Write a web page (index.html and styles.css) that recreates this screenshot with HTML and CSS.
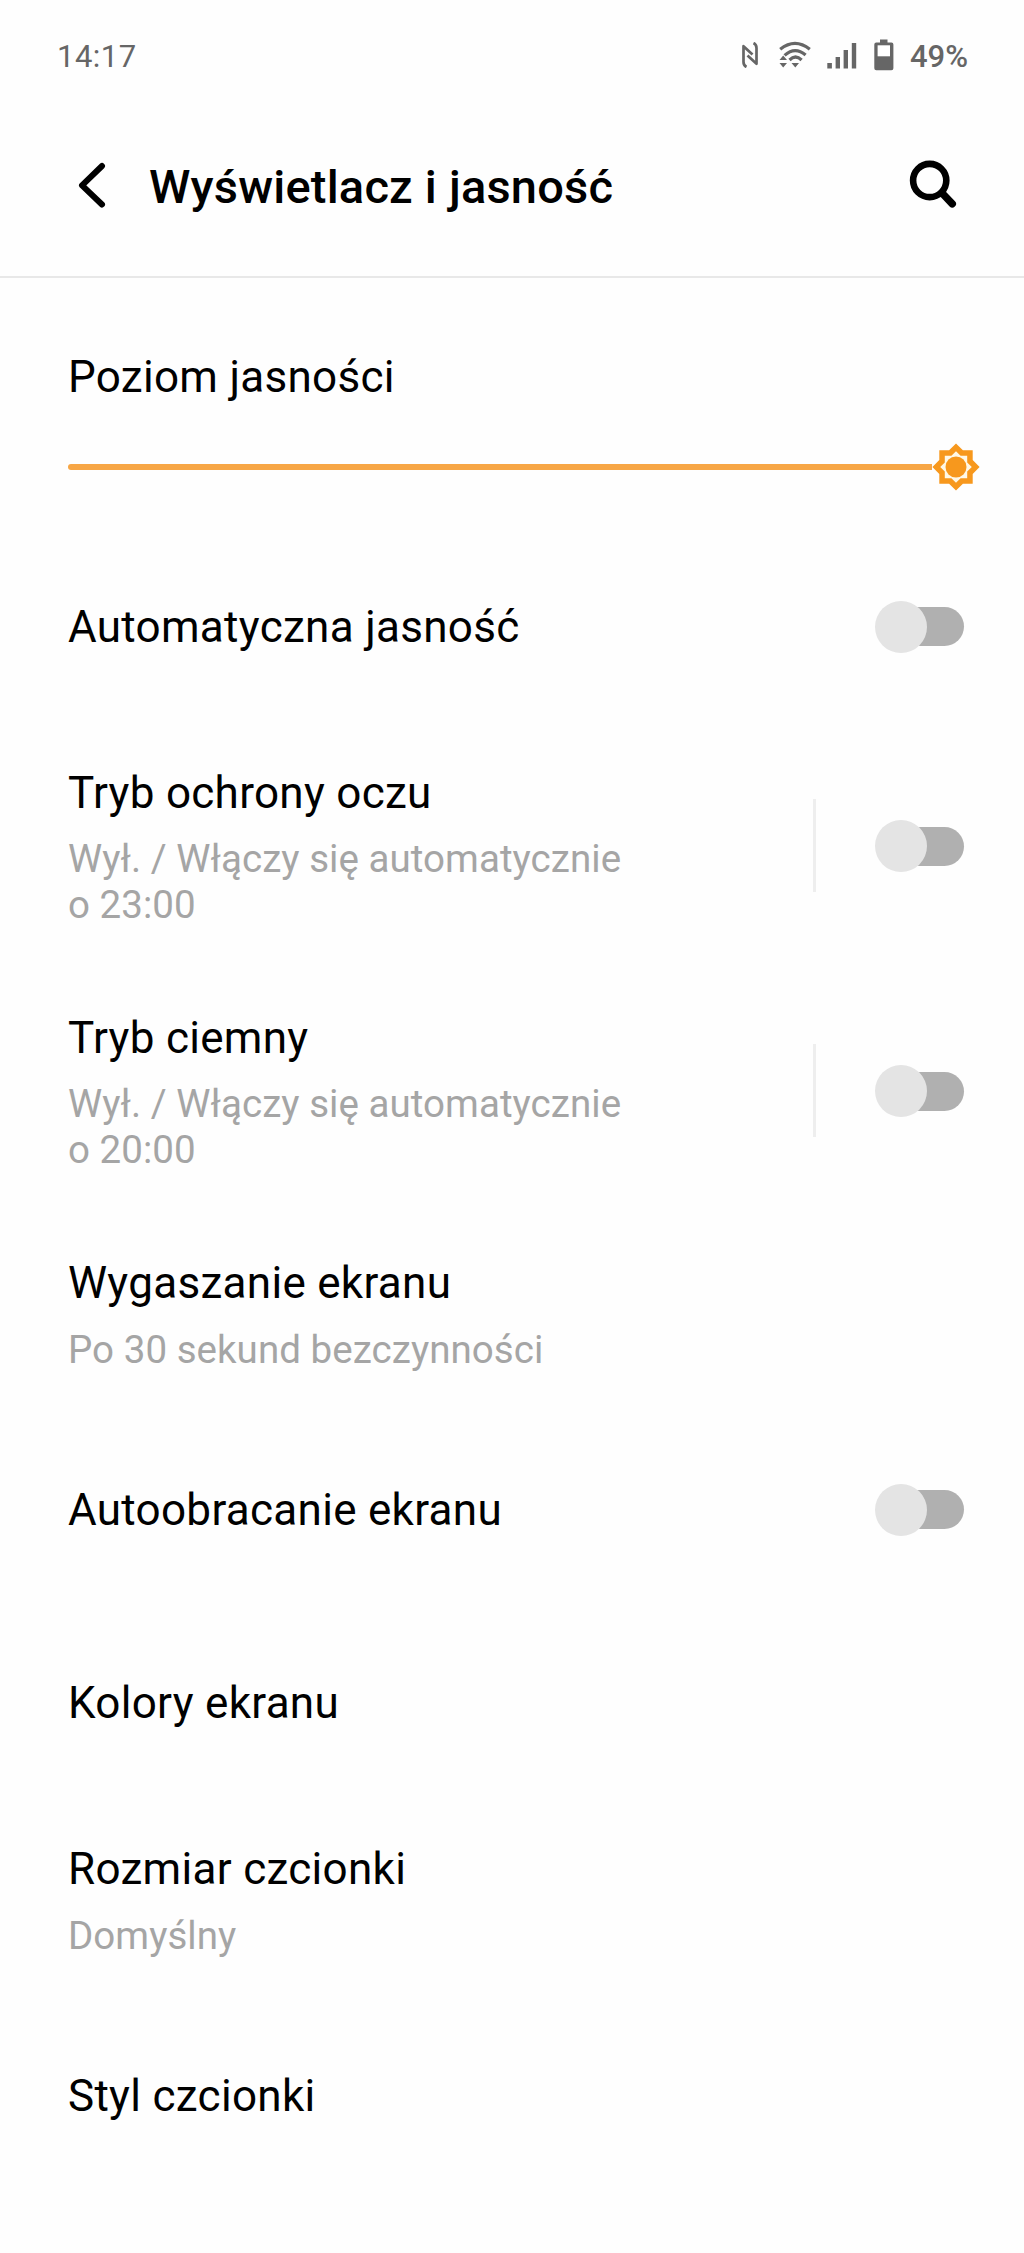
FILE: index.html
```html
<!DOCTYPE html>
<html lang="pl">
  <head>
    <meta charset="UTF-8" />
    <title>Wyświetlacz i jasność</title>
    <meta name="viewport" content="width=device-width, initial-scale=1.0" />
    <link rel="stylesheet" href="styles.css">
  </head>
  <body>
    <div class="status-bar">
      <span class="clock">14:17</span>
      <div class="status-icons">
        <!-- NFC -->
        <svg class="icon-nfc" width="16" height="26" viewBox="0 0 16 26" fill="none" stroke="#666" stroke-width="2.7" stroke-linejoin="round">
          <path d="M4.5 25 C2.5 24 1.5 22.5 1.5 20 V4.2 L10.5 12.5" />
          <path d="M11.5 1 C13.5 2 14.5 3.5 14.5 6 V21.8 L5.5 13.5" />
        </svg>
        <!-- Wi-Fi -->
        <svg class="icon-wifi" width="32" height="28" viewBox="0 0 32 28">
          <g fill="none" stroke="#666" stroke-width="3.2">
            <path d="M1.2 8.3 Q16 -3.6 30.8 8.3" />
            <path d="M5.6 14.4 Q16 5 26.6 14" />
            <path d="M10.5 19 Q16.5 13 22.6 19" />
          </g>
          <path fill="#666" d="M0.5 19 L4.2 14.5 L8 19 Z M0.5 22 H8 L4.2 26.5 Z M12.5 22 H20 L16.3 26.5 Z" />
        </svg>
        <!-- Signal -->
        <svg class="icon-signal" width="30" height="27" viewBox="0 0 30 27" fill="#666">
          <rect x="0.3" y="21" width="4.6" height="5.5" />
          <rect x="8.6" y="15" width="4.4" height="11.5" />
          <rect x="16.6" y="8" width="4.4" height="18.5" />
          <rect x="24.8" y="1" width="4.4" height="25.5" />
        </svg>
        <!-- Battery -->
        <svg class="icon-battery" width="20" height="32" viewBox="0 0 20 32">
          <path fill="#666" d="M6 0.5 H13.5 V3.5 H17.5 Q19.4 3.5 19.4 5.5 V29.3 Q19.4 31.3 17.4 31.3 H2.3 Q0.3 31.3 0.3 29.3 V5.5 Q0.3 3.5 2.3 3.5 H6 Z" />
          <rect fill="#fff" x="3.6" y="6.3" width="12.4" height="11" />
        </svg>
        <span class="battery-level">49%</span>
      </div>
    </div>

    <header class="header">
      <svg class="icon-back" width="30" height="48" viewBox="0 0 30 48" fill="none" stroke="#000" stroke-width="6" stroke-linecap="round" stroke-linejoin="round">
        <path d="M26 6 L6 25.3 L26 44.5" />
      </svg>
      <h1>Wyświetlacz i jasność</h1>
      <svg class="icon-search" width="48" height="48" viewBox="0 0 48 48" fill="none" stroke="#000">
        <circle cx="20.7" cy="20.5" r="16.6" stroke-width="6.6" />
        <path d="M33 33 L43.3 43.9" stroke-width="7.4" stroke-linecap="round" />
      </svg>
    </header>

    <section class="brightness">
      <h2>Poziom jasności</h2>
      <div class="slider">
        <div class="slider-track"></div>
        <svg class="slider-thumb" width="48" height="48" viewBox="-24 -24 48 48" fill="#f7981d">
          <path d="M0 -23.6 L6.9 -16.7 H16.7 V-6.9 L23.6 0 L16.7 6.9 V16.7 H6.9 L0 23.6 L-6.9 16.7 H-16.7 V6.9 L-23.6 0 L-16.7 -6.9 V-16.7 H-6.9 Z" />
          <path fill="#fff8e6" d="M0 -15.8 L4.6 -11.2 H11.2 V-4.6 L15.8 0 L11.2 4.6 V11.2 H4.6 L0 15.8 L-4.6 11.2 H-11.2 V4.6 L-15.8 0 L-11.2 -4.6 V-11.2 H-4.6 Z" />
          <circle r="10.5" />
        </svg>
      </div>
    </section>

    <main class="settings">
      <div class="row single">
        <h2>Automatyczna jasność</h2>
        <div class="toggle"></div>
      </div>
      <div class="row">
        <div class="text">
          <h2>Tryb ochrony oczu</h2>
          <p>Wył. / Włączy się automatycznie<br>o 23:00</p>
        </div>
        <div class="divider"></div>
        <div class="toggle"></div>
      </div>
      <div class="row">
        <div class="text">
          <h2>Tryb ciemny</h2>
          <p>Wył. / Włączy się automatycznie<br>o 20:00</p>
        </div>
        <div class="divider"></div>
        <div class="toggle"></div>
      </div>
      <div class="row">
        <div class="text">
          <h2>Wygaszanie ekranu</h2>
          <p>Po 30 sekund bezczynności</p>
        </div>
      </div>
      <div class="row single">
        <h2>Autoobracanie ekranu</h2>
        <div class="toggle"></div>
      </div>
      <div class="row single">
        <h2>Kolory ekranu</h2>
      </div>
      <div class="row">
        <div class="text">
          <h2>Rozmiar czcionki</h2>
          <p>Domyślny</p>
        </div>
      </div>
      <div class="row single">
        <h2>Styl czcionki</h2>
      </div>
    </main>
  </body>
</html>
```

FILE: styles.css
```css
* {
  box-sizing: border-box;
}

body {
  font-family: Roboto, "Noto Sans", sans-serif;
  background: #fefefe;
  color: #000;
  margin: 0;
}

h1,
h2,
p {
  margin: 0;
}

h2 {
  font-size: 44px;
  font-weight: 400;
  line-height: 52px;
  letter-spacing: 0.3px;
  white-space: nowrap;
}

svg {
  display: block;
  flex: none;
}

.status-bar {
  display: flex;
  justify-content: space-between;
  align-items: center;
  height: 110px;
  padding: 0 56px 0 57px;
  color: #666;
  font-size: 31px;
  line-height: 36px;
}

.clock {
  padding-top: 3px;
  letter-spacing: 0.5px;
}

.status-icons {
  display: flex;
  align-items: center;
}

.icon-nfc {
  margin-right: 21px;
}

.icon-wifi {
  margin-right: 16px;
}

.icon-signal {
  margin-right: 17px;
}

.icon-battery {
  margin-right: 16px;
}

.battery-level {
  padding-top: 3px;
  font-weight: 500;
}

.header {
  display: flex;
  align-items: center;
  height: 168px;
  padding: 0 67px 19px 76px;
  border-bottom: 2px solid #e8e8e8;
}

.header h1 {
  flex: 1;
  margin: 7px 0 0 43px;
  font-size: 47px;
  font-weight: 500;
  line-height: 56px;
  letter-spacing: 0.2px;
}

.brightness {
  height: 252px;
  padding: 73px 44px 0 68px;
}

.slider {
  display: flex;
  align-items: center;
  margin-top: 40px;
}

.slider-track {
  flex: 1;
  height: 6px;
  border-radius: 3px 0 0 3px;
  background: #f7a645;
}

.row {
  display: flex;
  align-items: center;
  padding: 43.5px 60px 41px 68px;
}

.single {
  height: 193.3px;
  padding-top: 0;
  padding-bottom: 0;
}

.row h2,
.text {
  flex: 1;
}

.text p {
  margin-top: 17.6px;
  color: #a5a5a5;
  font-size: 38.5px;
  line-height: 45.5px;
  letter-spacing: 0.05px;
}

.divider {
  width: 3px;
  height: 93px;
  margin: 0 59px 3px 0;
  background: #eee;
}

/* switch in the off position, the knob is wider than the track */
.toggle {
  display: flex;
  align-items: center;
  width: 89px;
  height: 52px;
}

.text ~ .toggle {
  margin-bottom: 2px;
}

.toggle::before {
  content: "";
  z-index: 1;
  width: 52px;
  height: 52px;
  border-radius: 50%;
  background: #e4e4e4;
}

.toggle::after {
  content: "";
  width: 64px;
  height: 39px;
  margin-left: -27px;
  border-radius: 20px;
  background: #b0b0b0;
}
```
